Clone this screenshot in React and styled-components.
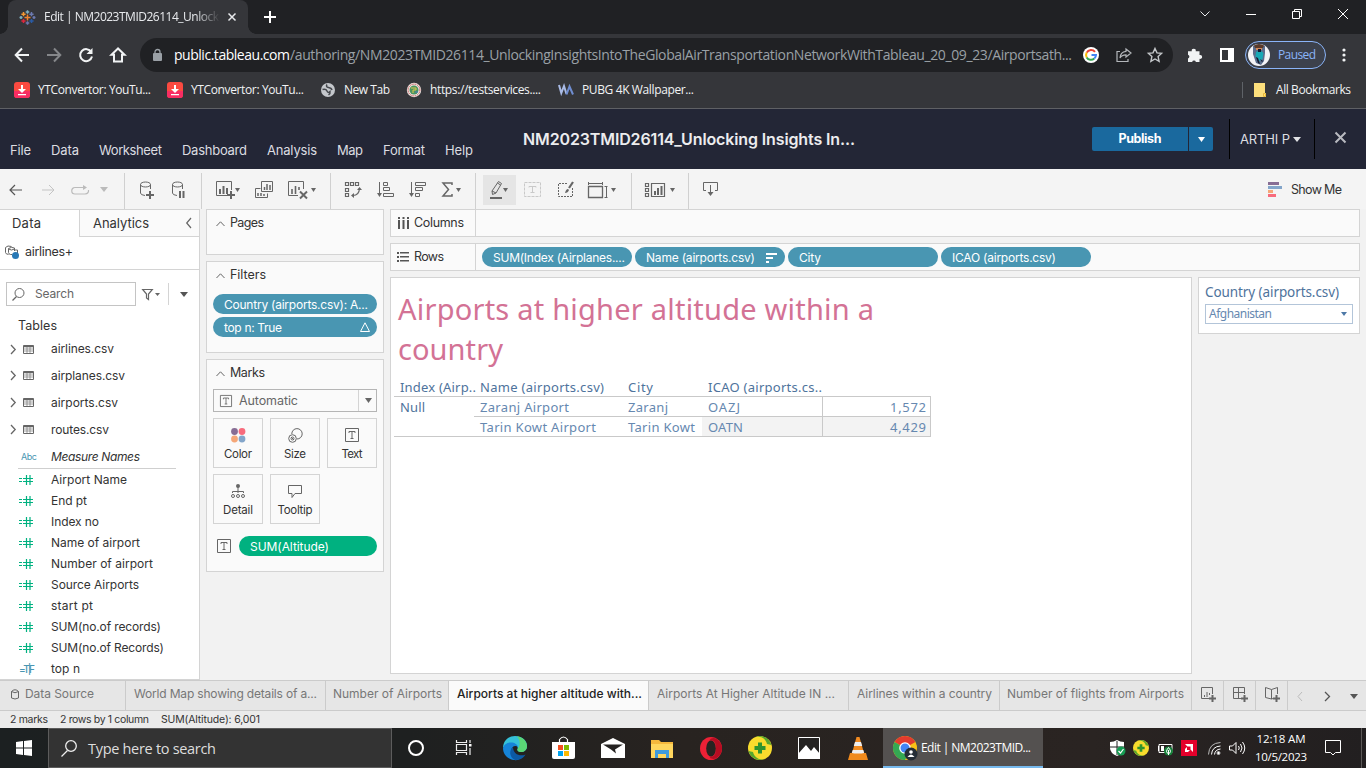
import React, { useLayoutEffect, useRef } from "react";
import styled, { createGlobalStyle, css } from "styled-components";

const ui = '"Inter", "Liberation Sans", sans-serif';
const segoe = '"Open Sans", "Noto Sans", sans-serif';
const viz = '"Noto Sans", "Open Sans", sans-serif';

const GlobalStyle = createGlobalStyle`
  * { box-sizing: border-box; }
  body { margin: 0; overflow: hidden; background: #f2f2f2; }
`;

const Label = styled.span`
  display: block;
  flex: none;
  width: ${(p) => p.$w}px;
  margin-left: ${(p) => p.$ml || 0}px;
  margin-top: ${(p) => p.$mt || 0}px;
  white-space: pre;
  font-family: ${(p) => p.$font || ui};
  font-size: ${(p) => p.$size || 12}px;
  font-weight: ${(p) => p.$weight || 400};
  font-style: ${(p) => (p.$italic ? "italic" : "normal")};
  color: ${(p) => p.$color || "#333"};
  line-height: ${(p) => p.$lh || 18}px;
`;

/* Tracks the text so that it fills the width given to it. */
function Text({ w, children, ...rest }) {
  const ref = useRef(null);
  useLayoutEffect(() => {
    const el = ref.current;
    el.style.letterSpacing = "0px";
    const natural = el.getBoundingClientRect().width;
    el.style.letterSpacing = (w - natural) / Math.max(1, children.length - 1) + "px";
  }, [w, children]);
  return (
    <Label $w={w} {...rest}>
      <span ref={ref}>{children}</span>
    </Label>
  );
}

const Svg = styled.svg`
  display: block;
  flex: none;
  margin-left: ${(p) => p.$ml || 0}px;
  margin-top: ${(p) => p.$mt || 0}px;
  overflow: visible;
`;
const Icon = ({ w = 16, h = 16, c = "#666", sw = 1, fill = "none", ml, mt, vb, children }) => (
  <Svg width={w} height={h} viewBox={vb || `0 0 ${w} ${h}`} fill={fill} stroke={c} strokeWidth={sw} $ml={ml} $mt={mt}>
    {children}
  </Svg>
);
const Caret = ({ ml, mt, w = 6, h = 4, c = "#666" }) => (
  <Icon w={w} h={h} ml={ml} mt={mt} c="none" fill={c}>
    <path d={`M0 0H${w}L${w / 2} ${h}Z`} />
  </Icon>
);

const Page = styled.div`
  width: 1366px;
  height: 768px;
  display: flex;
  flex-direction: column;
  overflow: hidden;
`;
const Row = styled.div`
  display: flex;
  align-items: center;
`;
const Rule = styled.div`
  flex: none;
  width: 1px;
  height: ${(p) => p.$h}px;
  margin-left: ${(p) => p.$ml || 0}px;
  background: ${(p) => p.$c || "#d4d4d4"};
`;

/* ---------- browser ---------- */
const TabStrip = styled.div`
  display: flex;
  height: 34px;
  background: #202124;
  padding-left: 8px;
`;
const BrowserTab = styled.div`
  position: relative;
  display: flex;
  align-items: center;
  width: 240px;
  padding-left: 12px;
  background: #35363a;
  border-radius: 8px 8px 0 0;
  &::before, &::after {
    content: "";
    position: absolute;
    bottom: 0;
    width: 8px;
    height: 8px;
  }
  &::before { left: -8px; background: radial-gradient(circle at 0 0, transparent 7.5px, #35363a 8px); }
  &::after { right: -8px; background: radial-gradient(circle at 100% 0, transparent 7.5px, #35363a 8px); }
`;
const Fade = styled.div`
  width: 176px;
  margin-left: 9px;
  mask-image: linear-gradient(90deg, #000 86%, transparent);
`;
const WindowButtons = styled.div`
  display: flex;
  align-items: center;
  height: 28px;
  margin-left: 924px;
`;
const AddressBar = styled.div`
  display: flex;
  align-items: center;
  height: 42px;
  background: #35363a;
  padding-left: 14px;
`;
const Omnibox = styled.div`
  display: flex;
  align-items: center;
  width: 1033px;
  height: 34px;
  margin-left: 14px;
  padding-left: 13px;
  border-radius: 17px;
  background: #202124;
`;
const Profile = styled.div`
  display: flex;
  align-items: center;
  width: 81px;
  height: 28px;
  margin-left: 11px;
  padding-left: 2px;
  border: 1px solid #8ab4f8;
  border-radius: 14px;
  background: #3c414c;
`;
const Bookmarks = styled.div`
  display: flex;
  align-items: center;
  height: 32px;
  padding: 0 0 5px 14px;
  background: #35363a;
`;
const BrowserEdge = styled.div`
  height: 1px;
  background: #5f6064;
`;

const tableauPluses = [
  [7.5, 7.5, 3, "#f0822f"], [7.5, 2, 1.8, "#7fb0c0"], [7.5, 13, 1.8, "#6b76b0"], [3.5, 4.2, 2.1, "#f59a33"],
  [11.5, 4.2, 2.1, "#6c79b0"], [3.5, 11, 2.1, "#e0263e"], [11.5, 11, 2.1, "#2a5ba5"], [1, 7.5, 1.5, "#7fb0c0"], [14, 7.5, 1.5, "#6c79b0"],
];
const TableauLogo = () => (
  <Icon w={15} h={15} sw={1.5}>
    {tableauPluses.map(([x, y, r, c], i) => (
      <path key={i} stroke={c} d={`M${x - r} ${y}h${2 * r}M${x} ${y - r}v${2 * r}`} />
    ))}
  </Icon>
);
const DownloadMark = ({ ml }) => (
  <Icon w={16} h={16} ml={ml} c="none">
    <rect width="16" height="16" rx="3" fill="#fb4a40" />
    <path d="M0 9v4a3 3 0 0 0 3 3h10a3 3 0 0 0 3-3V9z" fill="#f92d63" />
    <path d="M7 3h2v4h3l-4 4-4-4h3zM4 12h8v1.3H4z" fill="#fff" />
  </Icon>
);

function Browser() {
  return (
    <>
      <TabStrip>
        <BrowserTab>
          <TableauLogo />
          <Fade><Text w={175} $font={segoe} $size={12} $color="#e8eaed">Edit | NM2023TMID26114_Unlock</Text></Fade>
          <Icon w={8} h={8} ml={8} c="#e8eaed" sw={1.5}><path d="M.5.5l7 7M7.5.5l-7 7" /></Icon>
        </BrowserTab>
        <Row>
          <Icon w={12} h={12} ml={16} c="#fff" sw={2}><path d="M6 0v12M0 6h12" /></Icon>
        </Row>
        <WindowButtons>
          <Icon w={10} h={6} c="#e8eaed"><path d="M.5.5L5 5 9.5.5" /></Icon>
          <Icon w={10} h={10} ml={36} c="#fff"><path d="M0 5.5h10" /></Icon>
          <Icon w={10} h={10} ml={36} c="#fff"><path d="M.5 2.5h7v7h-7zM2.500 2V.5h7v7H8" /></Icon>
          <Icon w={10} h={10} ml={36} c="#fff"><path d="M0 0l10 10M10 0L0 10" /></Icon>
        </WindowButtons>
      </TabStrip>
      <AddressBar>
        <Icon w={16} h={16} c="#f1f3f4" sw={2}><path d="M15 8H2M8 1.5L1.7 8 8 14.500" /></Icon>
        <Icon w={16} h={16} ml={16} c="#85878a" sw={2}><path d="M1 8h13M8 1.500L14.300 8 8 14.500" /></Icon>
        <Icon w={16} h={16} ml={16} c="#f1f3f4" sw={2}><path d="M13.300 5A6 6 0 1 0 14 9.500" /><path d="M14.500 1v6h-6z" fill="#f1f3f4" stroke="none" /></Icon>
        <Icon w={16} h={16} ml={16} c="#f1f3f4" sw={2}><path d="M8 1.500L1.500 7.700H4V14.500h8V7.700h2.500z" /></Icon>
        <Omnibox>
          <Icon w={9} h={12} c="none"><rect y="4" width="9" height="8" rx="1" fill="#9aa0a6" /><path d="M2 5V3a2.500 2.500 0 0 1 5 0v2" stroke="#9aa0a6" strokeWidth="1.300" /></Icon>
          <Text w={116} $ml={12} $font={segoe} $size={14} $color="#fff">public.tableau.com</Text>
          <Text w={782} $font={segoe} $size={14} $color="#9aa0a6">/authoring/NM2023TMID26114_UnlockingInsightsIntoTheGlobalAirTransportationNetworkWithTableau_20_09_23/Airportsath...</Text>
          <Icon w={16} h={16} ml={11} c="none" sw={2}>
            <circle cx="8" cy="8" r="8" fill="#fff" />
            <path d="M12 4.800A5 5 0 0 0 3.700 5.600" stroke="#ea4335" /><path d="M3.700 5.600a5 5 0 0 0 0 4.800" stroke="#fbbc05" />
            <path d="M3.700 10.400a5 5 0 0 0 7.600 1.200" stroke="#34a853" /><path d="M11.300 11.600A5 5 0 0 0 13 8H8.500" stroke="#4285f4" />
          </Icon>
          <Icon w={16} h={16} ml={17} c="#b4b7bb" sw={1.200}><path d="M4 4.500H1v10h11V12" /><path d="M10 2l5 4-5 4V7.800C7 7.800 5.200 8.600 4 11c.2-4 2.500-6.300 6-6.700z" /></Icon>
          <Icon w={16} h={16} ml={15} c="#c4c7ca" sw={1.400}><path d="M8 1.500l2 4.400 4.600.5-3.500 3.200 1 4.800L8 12l-4.100 2.400 1-4.800L1.400 6.400 6 5.900z" /></Icon>
        </Omnibox>
        <Icon w={16} h={16} ml={14} c="none" fill="#f1f3f4"><path d="M1 4.200h3.800a2 2 0 1 1 3.900 0H12.500V8a2 2 0 1 1 0 3.800V15H8.900a2 2 0 0 0-3.800 0H1v-3.500a2 2 0 0 0 0-3.800z" /></Icon>
        <Icon w={14} h={14} ml={17} c="#fff" sw={2}><path d="M1 1h12v12H1z" /><path d="M8 1h5v12H8z" fill="#fff" stroke="none" /></Icon>
        <Profile>
          <Icon w={22} h={22} c="none"><circle cx="11" cy="11" r="11" fill="#f3f3f6" /><path d="M5 2q6-3 12 0v7l-1 8-3 4-5-2-3-9z" fill="#5b6d8c" /><path d="M6 1.500q5-3 10 0L15 4H7z" fill="#5a3a2a" /><path d="M8 4h6v2H8z" fill="#d08a5e" /><path d="M8 8l4-2 3.500 3-1 6-3 2-2-3-2-1z" fill="#18a8b5" /><path d="M10 5h3v3h-3zM8 13l2 6 2 1-2-6zM12 15l2 3 1-1z" fill="#111a31" /></Icon>
          <Text w={38} $ml={8} $font={segoe} $size={12} $color="#8ab4f8">Paused</Text>
        </Profile>
        <Icon w={4} h={16} ml={16} c="none" fill="#f1f3f4"><circle cx="2" cy="3" r="1.600" /><circle cx="2" cy="8" r="1.600" /><circle cx="2" cy="13" r="1.600" /></Icon>
      </AddressBar>
      <Bookmarks>
        <DownloadMark />
        <Text w={113} $ml={8} $font={segoe} $size={12} $color="#f1f3f4">YTConvertor: YouTu...</Text>
        <DownloadMark ml={16} />
        <Text w={113} $ml={8} $font={segoe} $size={12} $color="#f1f3f4">YTConvertor: YouTu...</Text>
        <Icon w={14} h={14} ml={17} c="none"><circle cx="7" cy="7" r="7" fill="#c4c7cb" /><path d="M1.500 6.500Q5 5.500 6 8t3 .5q.5 2-1.500 3.500M6 1.500Q4.500 4 7.500 4.500t3.500 2.500" stroke="#44474c" strokeWidth="1.500" /></Icon>
        <Text w={46} $ml={9} $font={segoe} $size={12} $color="#f1f3f4">New Tab</Text>
        <Icon w={14} h={14} ml={17} c="none"><circle cx="7" cy="7" r="7.200" fill="#efe6e0" /><circle cx="7" cy="7" r="5.900" stroke="#c2545a" strokeDasharray="1.500 .8" /><circle cx="7" cy="7" r="4.500" fill="#4d9460" /><path d="M4 5h5v2H6v3" stroke="#dfc74f" /><path d="M8 9h3" stroke="#4378bd" /></Icon>
        <Text w={111} $ml={9} $font={segoe} $size={12} $color="#f1f3f4">https://testservices....</Text>
        <Icon w={16} h={10} ml={17} c="#a9bbe6" sw={2}><path d="M1 0l2.300 8L6 1l2.500 8" /><path d="M8.500 9.500l3-8 3.500 8" stroke="#6f8dd0" /></Icon>
        <Text w={112} $ml={8} $font={segoe} $size={12} $color="#f1f3f4">PUBG 4K Wallpaper...</Text>
        <Rule $h={16} $ml={548} $c="#5f6368" />
        <Icon w={12} h={14} ml={11} c="none"><path d="M0 0h11v10h1v4H0z" fill="#fddf7c" /><path d="M9.500 10.500h2v3h-2z" stroke="#e8b93a" /></Icon>
        <Text w={75} $ml={10} $font={segoe} $size={12} $color="#f1f3f4">All Bookmarks</Text>
      </Bookmarks>
      <BrowserEdge />
    </>
  );
}

/* ---------- application header ---------- */
const Header = styled.header`
  display: flex;
  align-items: flex-start;
  height: 60px;
  background: #232636;
`;
const Menu = styled.nav`
  display: flex;
  width: 523px;
  padding: 32px 0 0 10px;
  gap: 20px;
`;
const PublishPart = styled.div`
  display: flex;
  align-items: center;
  justify-content: center;
  width: ${(p) => p.$w}px;
  height: 24px;
  margin: 18px 0 0 ${(p) => p.$ml}px;
  background: #1a699e;
  border-radius: ${(p) => p.$r};
`;
const Account = styled.div`
  display: flex;
  align-items: center;
  width: 86px;
  height: 40px;
  margin: 10px 0 0 16px;
  padding: 0 0 0 10px;
  border: solid #000;
  border-width: 0 1px;
`;
const menus = [["File", 21], ["Data", 28], ["Worksheet", 63], ["Dashboard", 65], ["Analysis", 50], ["Map", 26], ["Format", 42], ["Help", 28]];

const AppHeader = () => (
  <Header>
    <Menu>{menus.map(([t, w]) => <Text key={t} w={w} $size={13} $color="#dcdde1">{t}</Text>)}</Menu>
    <Text w={332} $mt={20} $lh={20} $size={16} $weight={600} $color="#ececee">NM2023TMID26114_Unlocking Insights In...</Text>
    <PublishPart $w={96} $ml={237} $r="2px 0 0 2px"><Text w={43} $size={12.500} $weight={700} $color="#fff">Publish</Text></PublishPart>
    <PublishPart $w={24} $ml={1} $r="0 2px 2px 0"><Caret w={7} h={5} c="#fff" /></PublishPart>
    <Account><Text w={50} $size={13} $color="#dcdde1">ARTHI P</Text><Caret ml={3} w={8} h={5} c="#e2e3e6" /></Account>
    <Icon w={11} h={11} ml={20} mt={23} c="#b9bac0" sw={2}><path d="M.5.500l10 10M10.500.500l-10 10" /></Icon>
  </Header>
);

/* ---------- toolbar ---------- */
const Toolbar = styled.div`
  display: flex;
  align-items: center;
  height: 40px;
  padding: 1px 0 0 9px;
  background: #f4f4f4;
`;
const Group = styled.div`
  display: flex;
  align-items: center;
  flex: none;
  height: 36px;
  width: ${(p) => p.$w}px;
  margin-top: 2px;
  padding-bottom: 2px;
  border-right: 1px solid #d0d0d0;
`;
const Pressed = styled.div`
  display: flex;
  align-items: center;
  width: 33px;
  height: 30px;
  margin-left: 7px;
  padding-left: 7px;
  background: #e5e5e5;
`;
const Bars = () => <path d="M4 8v5M7.500 5v8M11 7v6" strokeWidth="2" />;

const MainToolbar = () => (
  <Toolbar>
    <Group $w={116}>
      <Icon w={13} h={12} sw={1.200} c="#555"><path d="M13 6H1M6 1L1 6l5 5" /></Icon>
      <Icon w={13} h={12} ml={20} c="#c4c4c4"><path d="M0 6h12M7 1l5 5-5 5" /></Icon>
      <Icon w={18} h={10} ml={16} c="#bbb" sw={1.200}><path d="M13 2.500H4a3.200 3.200 0 0 0 0 6.500h10q4-.5 3.500-4" /><path d="M12 0l4 2.500L12 5z" fill="#bbb" stroke="none" /></Icon>
      <Caret ml={11} w={8} h={5} c="#bbb" />
    </Group>
    <Group $w={77}>
      <Icon w={15} h={18} ml={15} mt={1}><path d="M5 14.500Q.5 14 .5 12V3.500M10.500 3.500V8M.5 3.500C.5.2 10.500.2 10.500 3.500S.5 6.800.5 3.500" /><path d="M10 10v8M6 14h8" strokeWidth="2" /></Icon>
      <Icon w={13} h={18} ml={17} mt={1}><path d="M5 14.500Q.5 14 .5 12V3.500M10.500 3.500V8M.5 3.500C.5.2 10.500.2 10.500 3.500S.5 6.800.5 3.500" /><path d="M8 10v7M11.500 10v7" strokeWidth="2" /></Icon>
    </Group>
    <Group $w={129}>
      <Icon w={19} h={18} ml={14} mt={1}><path d="M11 14.500H.5V.5h15V9" /><Bars /><path d="M15 10v8M11 14h8" strokeWidth="2" /></Icon>
      <Caret ml={0} w={5} h={4} />
      <Icon w={18} h={17} ml={15}><path d="M6.500.5h11v10h-11zM5.500 7.500h-5v9h12v-4" /><path d="M9.500 6v3M12 3v6M15 4v5M3 12v3M6 12v3M9 13v2" strokeWidth="1.500" /></Icon>
      <Icon w={19} h={18} ml={15} mt={1}><path d="M10 14.500H.5V.5h15V8" /><path d="M4 8v5M7.500 5v8M11 6v3" strokeWidth="1.600" /><path d="M12 10.500l7 7M19 10.500l-7 7" strokeWidth="2" /></Icon>
      <Caret ml={4} w={5} h={4} />
    </Group>
    <Group $w={145}>
      <Icon w={17} h={16} ml={14}><path d="M.5.5h3v3h-3zM5.500.5h3v3h-3zM10.500.5h3v3h-3zM.5 6.500h3v3h-3zM.5 11.500h3v3h-3zM8 13.500q6 0 6.500-7" strokeWidth="1.200" /><path d="M12 8l2.500-3L17 8zM9 11l-3 2.500L9 16z" fill="#666" stroke="none" /></Icon>
      <Icon w={17} h={15} ml={15}><path d="M2.500 0v13M6.500.5h4v3h-4zM6.500 5.500h6v3h-6zM6.500 11.500h10v3h-10z" /><path d="M0 11h5l-2.500 4z" fill="#666" stroke="none" /></Icon>
      <Icon w={17} h={15} ml={15}><path d="M2.500 0v13M6.500.5h10v3h-10zM6.500 5.500h7v3h-7zM6.500 11.500h4v3h-4z" /><path d="M0 11h5l-2.500 4z" fill="#666" stroke="none" /></Icon>
      <Icon w={11} h={15} ml={16} sw={1.500}><path d="M10 3V1H1l5.500 6.500L1 14h9v-2" /></Icon>
      <Caret ml={3} w={5} h={4} />
    </Group>
    <Group $w={156}>
      <Pressed>
        <Icon w={12} h={19}><path d="M8.500 1.500l3 2L6 13l-3.500 1.500-.5-3.500zM2 11l4 2M7.500 3l3 2" /><path d="M0 18h12" strokeWidth="2" /></Icon>
        <Caret ml={1} w={5} h={4} />
      </Pressed>
      <Icon w={17} h={15} ml={8} c="#c9c9c9"><path d="M.5.5h16v14H.5z" strokeDasharray="3 1" /><path d="M5 5.500V4.500h7v1M8.500 4.500v6M6.500 10.500h4" /></Icon>
      <Icon w={16} h={15} ml={17}><path d="M9 1.500H.5v13h14V6" strokeDasharray="2 1" /><path d="M15 0L11 6" strokeWidth="2.200" /><path d="M10 7q-2 0-3 4 3 0 4-3z" fill="#666" stroke="none" /></Icon>
      <Icon w={20} h={16} ml={14}><path d="M.5 4.500h14v11H.5z" strokeWidth="1.300" /><path d="M.5 1.500h14M.5 0v3M14.500 0v3M18.500 4.500v11M16.500 4.500h3M16.500 15.500h3" /></Icon>
      <Caret ml={3} w={5} h={4} />
    </Group>
    <Group $w={57}>
      <Icon w={20} h={15} ml={13} mt={1}><path d="M.5.5h3v3h-3zM.5 5.500h3v3h-3zM.5 10.500h3v3h-3zM6.500.5h13v13h-13z" strokeWidth="1.200" /><path d="M10 8v4M13 5v7M16.500 3v9" strokeWidth="2" /></Icon>
      <Caret ml={5} w={5} h={4} />
    </Group>
    <Icon w={15} h={16} ml={14} mt={-1}><path d="M3 9.500H.5v-8h14v8H12M7.500 4v10" /><path d="M4.500 11h6L7.500 15z" fill="#666" stroke="none" /></Icon>
    <Icon w={14} h={15} ml={550} c="none"><path d="M0 0h11v3H0z" fill="#876d94" /><path d="M0 4h14v3H0z" fill="#83a5ca" /><path d="M0 8h5v3H0z" fill="#f5a778" /><path d="M0 12h8v3H0z" fill="#f86b7c" /></Icon>
    <Text w={51} $ml={9} $size={12.500}>Show Me</Text>
  </Toolbar>
);

/* ---------- data pane ---------- */
const Workspace = styled.main`
  display: flex;
  height: 471px;
`;
const DataPane = styled.aside`
  width: 200px;
  background: #fff;
  border: solid #d4d4d4;
  border-width: 1px 1px 1px 0;
  overflow: hidden;
`;
const PaneTab = styled.div`
  display: flex;
  align-items: center;
  width: ${(p) => p.$w}px;
  height: 27px;
  padding: 0 0 1px 12px;
  ${(p) => p.$off && css`background: #fafafa; border: solid #d4d4d4; border-width: 0 0 1px 1px;`}
`;
const Source = styled.div`
  display: flex;
  height: 33px;
  padding: 8px 0 0 5px;
  border-bottom: 1px solid #d4d4d4;
`;
const SearchRow = styled.div`
  display: flex;
  align-items: center;
  height: 24px;
  margin: 12px 0 0 6px;
`;
const SearchBox = styled.div`
  display: flex;
  align-items: center;
  width: 130px;
  height: 24px;
  padding-left: 5px;
  border: 1px solid #c4c4c4;
`;
const Field = styled.div`
  display: flex;
  align-items: center;
  height: ${(p) => p.$h}px;
  padding-left: ${(p) => p.$pl}px;
`;
const Divider = styled.div`
  width: 158px;
  height: 1px;
  margin: -2px 0 0 18px;
  background: #cfcfcf;
`;
const tables = [["airlines.csv", 63], ["airplanes.csv", 74], ["airports.csv", 67], ["routes.csv", 58]];
const fields = [["Airport Name", 76], ["End pt", 36], ["Index no", 48], ["Name of airport", 89], ["Number of airport", 102], ["Source Airports", 88], ["start pt", 42], ["SUM(no.of records)", 110], ["SUM(no.of Records)", 113]];

const Data = () => (
  <DataPane>
    <Row>
      <PaneTab $w={79}><Text w={29} $size={13}>Data</Text></PaneTab>
      <PaneTab $w={120} $off>
        <Text w={56} $ml={1} $size={13}>Analytics</Text>
        <Icon w={5} h={10} ml={37} mt={1} sw={1.200}><path d="M5 0L.7 5 5 10" /></Icon>
      </PaneTab>
    </Row>
    <Source>
      <Icon w={15} h={15}><path d="M3.500 9.500Q.5 9 .5 7.500v-5q2-2.500 6-1M7 9.500H5.500q-2-.5-2-2v-4q3-2 6-.5V6M10 5h2.500v3" /><path d="M3.500 4q3 2 6 0" /><circle cx="10.500" cy="10.500" r="3.500" fill="#2878b5" stroke="none" /></Icon>
      <Text w={48} $ml={5} $mt={-2} $size={12.500}>airlines+</Text>
    </Source>
    <SearchRow>
      <SearchBox>
        <Icon w={13} h={13}><circle cx="7.500" cy="5" r="4.500" /><path d="M4.500 8.500L.5 12.500" strokeWidth="1.300" /></Icon>
        <Text w={39} $ml={10} $size={12} $color="#666">Search</Text>
      </SearchBox>
      <Icon w={11} h={11} ml={6}><path d="M.7.500h9.600L6.500 5v5.500L4.500 9V5z" strokeWidth="1.200" /></Icon>
      <Caret ml={2} w={5} h={3} />
      <Rule $h={22} $ml={8} />
      <Caret ml={11} w={8} h={5} c="#555" />
    </SearchRow>
    <Field $h={30} $pl={18}><Text w={39} $mt={9} $size={12.500}>Tables</Text></Field>
    {tables.map(([t, w], i) => (
      <Field key={t} $h={i === 0 ? 26 : 27} $pl={10}>
        <Icon w={6} h={9} sw={1.300}><path d="M1 0l4.200 4.500L1 9" /></Icon>
        <Icon w={11} h={9} ml={7}><path d="M.5.500h10v8H.5z" /><path d="M.5 1.500h10" strokeWidth="1.500" /><path d="M.5 4h10M.5 6h10M4 2v6.500M7 2v6.500" strokeWidth=".6" /></Icon>
        <Text w={w} $ml={17} $size={12}>{t}</Text>
      </Field>
    ))}
    <Field $h={27} $pl={21}><Text w={16} $size={9} $color="#4996b2">Abc</Text><Text w={89} $ml={14} $italic>Measure Names</Text></Field>
    <Divider />
    {fields.map(([t, w]) => (
      <Field key={t} $h={21} $pl={19}>
        <Icon w={14} h={10} c="#00b180" sw={1.200}><path d="M0 3.500h3M0 6.500h3M4 3.500h10M4 6.500h10M7.500 0v10M11 0v10" /></Icon>
        <Text w={w} $ml={18}>{t}</Text>
      </Field>
    ))}
    <Field $h={21} $pl={19}><Text w={16} $size={10} $weight={500} $color="#4996b2">=T|F</Text><Text w={29} $ml={16}>top n</Text></Field>
  </DataPane>
);

/* ---------- cards ---------- */
const Cards = styled.section`
  display: flex;
  flex-direction: column;
  gap: 6px;
  width: 178px;
  margin-left: 6px;
`;
const Card = styled.div`
  flex: none;
  height: ${(p) => p.$h}px;
  padding: 4px 6px 0;
  background: #fafafa;
  border: 1px solid #d4d4d4;
`;
const CardHead = styled.div`
  display: flex;
  align-items: center;
  height: 19px;
  padding: 0 0 1px 3px;
`;
const Pill = styled.div`
  display: flex;
  align-items: center;
  flex: none;
  width: ${(p) => p.$w}px;
  height: 20px;
  padding: 1px 0 0 11px;
  border-radius: 10px;
  margin: ${(p) => p.$m || 0};
  background: ${(p) => p.$c || "#4996b2"};
`;
const MarkSelect = styled.div`
  display: flex;
  align-items: center;
  height: 23px;
  margin-top: 6px;
  padding-left: 6px;
  border: 1px solid #b5b5b5;
`;
const MarkGrid = styled.div`
  display: grid;
  grid-template-columns: repeat(3, 50px);
  gap: 6px 7px;
  margin-top: 6px;
`;
const MarkButton = styled.div`
  display: flex;
  flex-direction: column;
  align-items: center;
  height: 50px;
  padding-top: 8px;
  border: 1px solid #d4d4d4;
`;
const Collapse = ({ t, w }) => (
  <CardHead>
    <Icon w={9} h={5} mt={1}><path d="M.5 5L4.500.8 8.500 5" /></Icon>
    <Text w={w} $ml={5} $size={12.500}>{t}</Text>
  </CardHead>
);
const TBox = ({ s = 14, ml }) => (
  <Icon w={s} h={s} vb="0 0 14 14" ml={ml}><path d="M.5.5h13v13H.5zM4 5V3.500h6V5M7 3.500v7M5.500 10.500h3" /></Icon>
);
const Slot = styled.div`
  display: flex;
  align-items: center;
  height: 16px;
  margin-bottom: 2px;
`;
const Mark = ({ t, w, children }) => (
  <MarkButton><Slot>{children}</Slot><Text w={w} $size={11.500}>{t}</Text></MarkButton>
);

const Shelves = () => (
  <Cards>
    <Card $h={46}><Collapse t="Pages" w={34} /></Card>
    <Card $h={92}>
      <Collapse t="Filters" w={36} />
      <Pill $w={164} $m="9px 0 0"><Text w={144} $size={12} $color="#fff">Country (airports.csv): A...</Text></Pill>
      <Pill $w={164} $m="3px 0 0">
        <Text w={58} $size={12} $color="#fff">top n: True</Text>
        <Icon w={10} h={10} ml={78} mt={-1} c="#fff"><path d="M5 .8L9.500 9.500H.5z" /></Icon>
      </Pill>
    </Card>
    <Card $h={213}>
      <Collapse t="Marks" w={35} />
      <MarkSelect>
        <TBox s={12} />
        <Text w={59} $ml={7} $mt={1} $size={12.500} $color="#666">Automatic</Text>
        <Rule $h={21} $ml={60} />
        <Caret ml={6} w={7} h={5} />
      </MarkSelect>
      <MarkGrid>
        <Mark t="Color" w={28}><Icon w={15} h={15} c="none"><circle cx="3.500" cy="3.500" r="3.400" fill="#876d94" /><circle cx="11" cy="3.500" r="3.400" fill="#f86b7c" /><circle cx="3.500" cy="11" r="3.400" fill="#f5a778" /><circle cx="11" cy="11" r="3.400" fill="#83a5ca" /></Icon></Mark>
        <Mark t="Size" w={22}><Icon w={15} h={15}><path d="M3.800 6a5.200 5.200 0 1 1 5 5" /><circle cx="4.500" cy="10.500" r="3.800" /><circle cx="4.500" cy="10.500" r="1.500" /><path d="M3 9l3 3" /></Icon></Mark>
        <Mark t="Text" w={21}><TBox /></Mark>
        <Mark t="Detail" w={30}><Icon w={14} h={14}><circle cx="7" cy="2" r="2" fill="#666" stroke="none" /><path d="M7 3v6M1.500 9V7.500h11V9" /><circle cx="2" cy="12" r="1.500" /><circle cx="7" cy="12" r="1.500" /><circle cx="12" cy="12" r="1.500" /></Icon></Mark>
        <Mark t="Tooltip" w={35}><Icon w={14} h={13}><path d="M.5.5h13v8H7l-3 4v-4H.5z" /></Icon></Mark>
      </MarkGrid>
      <Row><TBox ml={4} /><Pill $w={138} $m="12px 0 12px 8px" $c="#00b180"><Text w={79} $size={12} $color="#fff">SUM(Altitude)</Text></Pill></Row>
    </Card>
  </Cards>
);

/* ---------- worksheet ---------- */
const Sheet = styled.section`
  display: flex;
  flex-direction: column;
  gap: 6px;
  width: 970px;
  margin-left: 6px;
`;
const Shelf = styled.div`
  display: flex;
  flex: none;
  align-items: center;
  height: 28px;
  background: #fafafa;
  border: 1px solid #d4d4d4;
`;
const ShelfName = styled.div`
  display: flex;
  align-items: center;
  width: 85px;
  height: 26px;
  margin-right: 6px;
  padding-left: 7px;
  border-right: 1px solid #d4d4d4;
`;
const Pills = styled.div`
  display: flex;
  gap: 3px;
`;
const Stage = styled.div`
  display: flex;
  align-items: flex-start;
  gap: 6px;
`;
const View = styled.div`
  width: 802px;
  height: 397px;
  padding: 11px 0 0 3px;
  background: #fff;
  border: 1px solid #d4d4d4;
`;
const Heading = styled.div`
  height: 88px;
  padding-left: 4px;
`;
const Grid = styled.div`
  display: grid;
  grid-template-columns: 80px 148px 80px 120px 109px;
  grid-template-rows: 20px 20px 20px;
  width: 537px;
`;
const Cell = styled.div`
  display: flex;
  align-items: flex-start;
  justify-content: ${(p) => (p.$right ? "flex-end" : "flex-start")};
  padding: 0 ${(p) => (p.$right ? 4 : 0)}px 0 6px;
  border: solid #c9c9c9;
  border-width: 0 ${(p) => (p.$right ? 1 : 0)}px ${(p) => (p.$line ? 1 : 0)}px ${(p) => (p.$right ? 1 : 0)}px;
  background: ${(p) => (p.$shade ? "#f3f3f3" : "transparent")};
`;
const FilterCard = styled.div`
  width: 162px;
  height: 57px;
  padding: 5px 6px;
  background: #fff;
  border: 1px solid #d4d4d4;
`;
const Select = styled.div`
  display: flex;
  align-items: center;
  justify-content: space-between;
  height: 20px;
  margin-top: 3px;
  padding: 0 5px 0 3px;
  width: 148px;
  border: 1px solid #b3c5d9;
`;
const CellText = ({ w, b, children }) => (
  <Text w={w} $mt={1} $font={viz} $size={13} $color={b ? "#4e739c" : "#6688b0"}>{children}</Text>
);

const Worksheet = () => (
  <Sheet>
    <Shelf>
      <ShelfName>
        <Icon w={11} h={12} mt={-1} c="none" fill="#555"><path d="M0 0h2v2H0zM4.500 0h2v2h-2zM9 0h2v2H9zM0 3h2v9H0zM4.500 3h2v9h-2zM9 3h2v9H9z" /></Icon>
        <Text w={50} $ml={5} $size={12.500}>Columns</Text>
      </ShelfName>
    </Shelf>
    <Shelf>
      <ShelfName>
        <Icon w={12} h={10} ml={-1} mt={-1} c="none" fill="#555"><path d="M0 0h2v2H0zM0 4h2v2H0zM0 8h2v2H0zM3 0h9v1.500H3zM3 4h9v1.500H3zM3 8h9v1.500H3z" /></Icon>
        <Text w={30} $ml={5} $size={12.500}>Rows</Text>
      </ShelfName>
      <Pills>
        <Pill $w={150}><Text w={132} $color="#fff">SUM(Index (Airplanes....</Text></Pill>
        <Pill $w={150}><Text w={109} $color="#fff">Name (airports.csv)</Text><Icon w={11} h={10} ml={11} c="#fff" sw={2}><path d="M0 1h11M0 5h7M0 9h3" /></Icon></Pill>
        <Pill $w={150}><Text w={22} $color="#fff">City</Text></Pill>
        <Pill $w={150}><Text w={104} $color="#fff">ICAO (airports.csv)</Text></Pill>
      </Pills>
    </Shelf>
    <Stage>
      <View>
        <Heading>
          <Text w={476} $font={viz} $size={29} $lh={40} $color="#d37295">Airports at higher altitude within a</Text>
          <Text w={105} $font={viz} $size={29} $lh={40} $color="#d37295">country</Text>
        </Heading>
        <Grid>
          <Cell $line><CellText b w={76}>Index (Airp..</CellText></Cell>
          <Cell $line><CellText b w={124}>Name (airports.csv)</CellText></Cell>
          <Cell $line><CellText b w={25}>City</CellText></Cell>
          <Cell $line><CellText b w={114}>ICAO (airports.cs..</CellText></Cell>
          <Cell $line />
          <Cell><CellText b w={25}>Null</CellText></Cell>
          <Cell $line><CellText w={89}>Zaranj Airport</CellText></Cell>
          <Cell $line><CellText w={40}>Zaranj</CellText></Cell>
          <Cell $line><CellText w={32}>OAZJ</CellText></Cell>
          <Cell $line $right><CellText w={36}>1,572</CellText></Cell>
          <Cell $line />
          <Cell $line><CellText w={116}>Tarin Kowt Airport</CellText></Cell>
          <Cell $line><CellText w={67}>Tarin Kowt</CellText></Cell>
          <Cell $line $shade><CellText w={35}>OATN</CellText></Cell>
          <Cell $line $right $shade><CellText w={36}>4,429</CellText></Cell>
        </Grid>
      </View>
      <FilterCard>
        <Text w={134} $font={viz} $size={13.500} $color="#4e739c">Country (airports.csv)</Text>
        <Select><Text w={63} $font={viz} $size={12} $color="#6688b0">Afghanistan</Text><Caret w={6} h={4} c="#4e79a7" /></Select>
      </FilterCard>
    </Stage>
  </Sheet>
);

/* ---------- sheet tabs and status ---------- */
const SheetTabs = styled.div`
  display: flex;
  height: 31px;
  background: #e6e6e6;
  border: solid #cbcbcb;
  border-width: 1px 0;
`;
const SheetTab = styled.div`
  display: flex;
  align-items: center;
  flex: none;
  width: ${(p) => p.$w}px;
  padding: 0 0 3px ${(p) => p.$pl || 8}px;
  border-right: 1px solid #cbcbcb;
  background: ${(p) => (p.$on ? "#fafafa" : "transparent")};
`;
const Status = styled.div`
  display: flex;
  align-items: center;
  height: 17px;
  padding-left: 10px;
  background: #ebebeb;
`;
const sheets = [["World Map showing details of a...", 200, 183], ["Number of Airports", 123, 109, 7], ["Airports at higher altitude with...", 200, 185, 8, true], ["Airports At Higher Altitude IN ...", 200, 178], ["Airlines within a country", 151, 135], ["Number of flights from Airports", 192, 177, 7]];

const Bottom = () => (
  <>
    <SheetTabs>
      <SheetTab $w={126} $pl={11}>
        <Icon w={8} h={11} mt={1}><path d="M.5 2.500v6.500q3.500 2 7 0V2.500M.5 2.500Q4-1 7.500 2.500 4 5 .5 2.500" /></Icon>
        <Text w={69} $ml={6} $color="#777">Data Source</Text>
      </SheetTab>
      {sheets.map(([t, w, tw, pl, on]) => (
        <SheetTab key={t} $w={w} $pl={pl} $on={on}><Text w={tw} $weight={on ? 500 : 400} $color={on ? "#222" : "#777"}>{t}</Text></SheetTab>
      ))}
      <SheetTab $w={32} $pl={9}><Icon w={15} h={15}><path d="M8 11.500H.5v-11h11V7M3.500 8v2M6 5v5M8.500 6v2" /><path d="M11.500 8v7M8 11.500h7" strokeWidth="2" /></Icon></SheetTab>
      <SheetTab $w={32} $pl={9}><Icon w={15} h={15}><path d="M8 11.500H.5v-11h11V7M5.500.5v11M.5 5.500h11" /><path d="M11.500 8v7M8 11.500h7" strokeWidth="2" /></Icon></SheetTab>
      <SheetTab $w={32} $pl={9}><Icon w={15} h={15}><path d="M8 11.500L6.500 12 .5 10.500V.5l6 2 6-2V7M6.500 2.500V12" /><path d="M11.500 8v7M8 11.500h7" strokeWidth="2" /></Icon></SheetTab>
      <Row>
        <Icon w={5} h={9} ml={9} mt={2} c="#bbb"><path d="M5 0L1 4.500 5 9" /></Icon>
        <Icon w={5} h={9} ml={23} mt={2} c="#555" sw={1.300}><path d="M0 0l4.500 4.500L0 9" /></Icon>
        <Caret ml={20} mt={2} w={8} h={5} c="#555" />
      </Row>
    </SheetTabs>
    <Status>
      <Text w={38} $size={10.500}>2 marks</Text>
      <Text w={89} $ml={12} $size={10.500}>2 rows by 1 column</Text>
      <Text w={99} $ml={12} $size={10.500}>SUM(Altitude): 6,001</Text>
    </Status>
  </>
);

/* ---------- taskbar ---------- */
const Taskbar = styled.footer`
  display: flex;
  align-items: center;
  height: 40px;
  background: linear-gradient(90deg, #1c2021 0, #1e2020 30%, #282320 50%, #2a2422 80%, #221f20);
`;
const Start = styled.div`
  display: flex;
  width: 48px;
  padding-left: 16px;
`;
const TaskSearch = styled.div`
  display: flex;
  align-items: center;
  width: 344px;
  height: 40px;
  padding-left: 12px;
  background: #333;
  border: 1px solid #5c5c5c;
`;
const ActiveTask = styled.div`
  display: flex;
  align-items: center;
  width: 160px;
  height: 40px;
  margin-left: 15px;
  padding: 2px 0 0 10px;
  background: #545150;
  border-bottom: 2px solid #76b9ed;
`;
const Clock = styled.div`
  display: flex;
  flex-direction: column;
  align-items: center;
  width: 52px;
  margin-left: 10px;
`;
const PlusDisc = ({ s, ml }) => (
  <Icon w={s} h={s} vb="0 0 24 24" ml={ml} c="none">
    <circle cx="12" cy="12" r="12" fill="#f8dc2d" />
    <path d="M5 2.300A12 12 0 0 1 23.500 9L19 8A9 9 0 0 0 5 2.300zM19 21.700A12 12 0 0 1 .5 15L5 16a9 9 0 0 0 14 5.700z" fill="#58a72e" />
    <path d="M10 6.500h4V10h3.500v4H14v3.500h-4V14H6.500v-4H10z" fill="#2d932e" />
  </Icon>
);

const WindowsTaskbar = () => (
  <Taskbar>
    <Start><Icon w={16} h={16} c="none" fill="#fff"><path d="M0 2l7-1v6.500H0zM8 .9L16 0v7.500H8zM0 8.500h7V15l-7-1zM8 8.500h8V16l-8-1.100z" /></Icon></Start>
    <TaskSearch>
      <Icon w={16} h={17} c="#eee" sw={1.300}><circle cx="10" cy="6" r="5.300" /><path d="M6.500 10.500L.5 16.500" /></Icon>
      <Text w={128} $ml={11} $mt={1} $lh={22} $font={segoe} $size={14.500} $color="#dedede">Type here to search</Text>
    </TaskSearch>
    <Icon w={16} h={16} ml={16} c="#fff" sw={2}><circle cx="8" cy="8" r="7" /></Icon>
    <Icon w={16} h={14} ml={32} mt={-2} c="#eee" sw={1.200}><path d="M.5 0v2.500h10V0M.5 4.500h10v6H.5zM.5 15v-2.500h10V15M14 0v3M14 8v7" /><path d="M13 4h2.500v2.500H13z" fill="#fff" stroke="none" /></Icon>
    <Icon w={24} h={24} ml={31} c="none">
      <path d="M0 12C0 5 5 0 12 0c8 0 12 5.500 12 10 0 4-3 6-6 6-3 0-4-1.500-3.500-3 1-2-1-5-5-5C5 8 1 10 0 12z" fill="#35c1d8" />
      <path d="M14 .2c6 1 10 5.300 10 9.800 0 4-3 6-6 6-3 0-4-1.500-3.500-3C18 9 17 4 14 .2z" fill="#5bd676" />
      <path d="M0 12c1-4 5-6 9.500-5.500 2.500.5 4.500 2 5.500 4-5-2-8 2-6 7 1.500 3.500 6 4.500 11 2.500-3 4-7 4.500-9 4C4 23 0 18 0 12z" fill="#1684d8" />
      <path d="M10 11c-4 3-4 10 2 13 4 0 8-1 10.500-5.500C17 21 10 18 10 11z" fill="#0c59a4" />
    </Icon>
    <Icon w={23} h={24} ml={25} c="none"><path d="M7.500 7V3.500Q11.500-1.500 15.500 3.500V7" stroke="#fff" strokeWidth="1.200" /><path d="M0 6h23v15q0 2-2 2H2q-2 0-2-2z" fill="#fff" /><path d="M6 9h5v5H6z" fill="#f25022" /><path d="M12 9h5v5h-5z" fill="#7fba00" /><path d="M6 15h5v5H6z" fill="#00a4ef" /><path d="M12 15h5v5h-5z" fill="#ffb900" /></Icon>
    <Icon w={24} h={20} ml={26} c="none" fill="#fff"><path d="M0 6l12-6 12 6v14H0z" /><path d="M2 6.500h20l-8 5 1 4-5-4z" fill="#242221" /></Icon>
    <Icon w={22} h={19} ml={26} c="none"><path d="M0 1h8l2 2h12v16H0z" fill="#f5b83d" /><path d="M0 5h22v14H0z" fill="#ffd65e" /><path d="M4 19v-8h14v8h-3v-4H7v4z" fill="#3f9bdc" /></Icon>
    <Icon w={22} h={23} ml={27} c="none"><ellipse cx="11" cy="11.500" rx="11" ry="11.500" fill="#ec2136" /><path d="M16 1.500q6 4 6 10t-6 10q-5 1.500-7-2 7 2 7-8T9 3.500q3-3.500 7-2z" fill="#b70d22" /><ellipse cx="11" cy="11.500" rx="4.800" ry="8" fill="#282321" /></Icon>
    <PlusDisc s={24} ml={26} />
    <Icon w={22} h={22} ml={26} c="none"><path d="M.5.5h21v21H.5z" fill="#242221" stroke="#fff" /><path d="M0 17l8-9 5 6 3-4 6 7v5H0z" fill="#fff" /></Icon>
    <Icon w={20} h={23} ml={28} c="none"><path d="M8.500 0h3l5 18h-13z" fill="#f28b20" /><path d="M7 5h6l1.200 4H5.800zM4.700 13h10.600l1.100 3.500H3.600z" fill="#eee" /><path d="M2 16h2q6 3 12 0h2l2 7H0z" fill="#f08a1c" /></Icon>
    <ActiveTask>
      <Icon w={24} h={24} c="none"><circle cx="12" cy="12" r="12" fill="#fbc116" /><path d="M12 12L1.600 6A12 12 0 0 1 22.400 6z" fill="#e33b2e" /><path d="M12 12L1.600 6A12 12 0 0 0 12 24l5-9z" fill="#34a853" /><circle cx="12" cy="12" r="5.800" fill="#fff" /><circle cx="12" cy="12" r="4.500" fill="#4285f4" /><circle cx="18" cy="18" r="6.500" fill="#252d36" /><circle cx="18" cy="16" r="1.800" fill="#fff" /><path d="M14.500 21q3.500-5 7 0z" fill="#fff" /></Icon>
      <Text w={110} $ml={4} $font={segoe} $size={12} $color="#fff">Edit | NM2023TMID...</Text>
    </ActiveTask>
    <Icon w={16} h={16} ml={67} c="none"><path d="M7 0q3 2 7 2v6q0 5-7 8Q0 13 0 8V2q4 0 7-2z" fill="#fff" /><path d="M7 1v14M0 7h14" stroke="#222" /><circle cx="11" cy="11" r="4.500" fill="#159b52" /><path d="M8.500 11l2 2 3-4" stroke="#fff" strokeWidth="1.200" /></Icon>
    <PlusDisc s={16} ml={7} />
    <Icon w={15} h={15} ml={9} c="#fff"><path d="M1 3.500h13v8H1zM.5 5v5" /><path d="M3 5h3v5H3z" fill="#fff" stroke="none" /><circle cx="10.500" cy="10" r="4.500" fill="#16823b" stroke="none" /><path d="M10.500 6.500q4 5 0 6-4-1 0-6M10.500 9v5" /></Icon>
    <Icon w={16} h={16} ml={8} c="none"><path d="M0 0h16v16H0z" fill="#e4002b" /><path d="M4 4h8v8l-2.500-2.500v-3h-3z" fill="#fff" /><path d="M6 7v3h3l-2 2H4V9z" fill="#fff" /></Icon>
    <Icon w={13} h={13} ml={11} c="#bbb"><path d="M.5 12.500Q1 1 12.500.5" /><path d="M3.500 12.500Q4 4.500 12.500 4M6.500 12.500Q7 7.500 12.500 7" stroke="#fff" /><circle cx="10.500" cy="11" r="1.500" fill="#fff" /></Icon>
    <Icon w={16} h={14} ml={8} c="#fff"><path d="M.5 5h3L7 1.500v11L3.500 9h-3zM9.500 5q1.500 2 0 4M11.500 3q3 4 0 8M13.500 1q4.500 6 0 12" /></Icon>
    <Clock>
      <Text w={49} $font={segoe} $size={11.500} $color="#fff">12:18 AM</Text>
      <Text w={52} $font={segoe} $size={11.500} $color="#fff">10/5/2023</Text>
    </Clock>
    <Icon w={16} h={16} ml={18} c="#fff"><path d="M.5.500h15v12h-5L8 15l-2.500-2.500h-5z" /></Icon>
    <Rule $h={40} $ml={20} $c="#5b5857" />
  </Taskbar>
);

export default function App() {
  return (
    <Page>
      <GlobalStyle />
      <Browser />
      <AppHeader />
      <MainToolbar />
      <Workspace>
        <Data />
        <Shelves />
        <Worksheet />
      </Workspace>
      <Bottom />
      <WindowsTaskbar />
    </Page>
  );
}
